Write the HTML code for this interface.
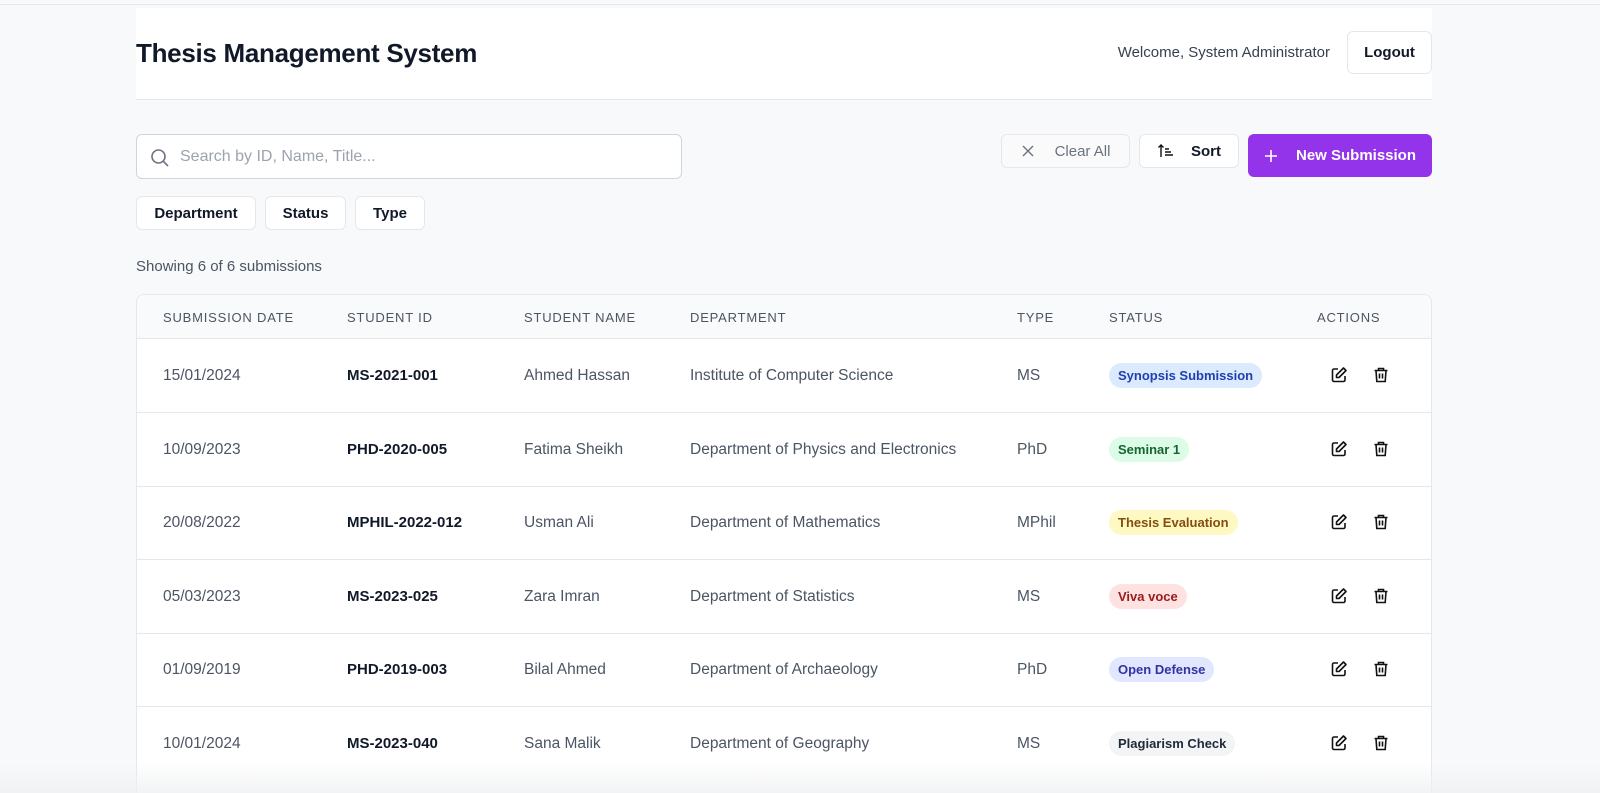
<!DOCTYPE html>
<html style="height:793px;overflow:hidden"><head><meta charset="utf-8"><style>
*{box-sizing:border-box;margin:0;padding:0}
body{width:1600px;height:793px;overflow:hidden;background:#f8f9fa;font-family:"Liberation Sans",sans-serif;color:#111827;position:relative}
.topline{position:absolute;left:0;top:4px;width:1600px;height:1px;background:#e5e7eb}
.header{position:absolute;left:136px;top:8px;width:1296px;height:92px;background:#fff;border-bottom:1px solid #e5e7eb}
.header h1{position:absolute;left:0;top:30px;font-size:26px;font-weight:bold;letter-spacing:-0.3px;color:#111827}
.welcome{position:absolute;right:102px;top:36px;font-size:15px;color:#374151}
.logout{position:absolute;right:0;top:23px;width:85px;height:43px;border:1px solid #e5e7eb;border-radius:6px;background:#fff;font-size:15px;font-weight:bold;display:flex;align-items:center;justify-content:center}
.search{position:absolute;left:136px;top:134px;width:546px;height:45px;border:1px solid #d1d5db;border-radius:6px;background:#fff}
.search span{position:absolute;left:43px;top:13px;font-size:16px;color:#9ca3af}
.btn{position:absolute;height:34px;border:1px solid #e5e7eb;border-radius:6px;background:#fff;font-size:15px;display:flex;align-items:center;justify-content:center}
.new{position:absolute;left:1248px;top:134px;width:184px;height:43px;background:#9333ea;border-radius:6px;color:#fff;font-size:15px;font-weight:bold;display:flex;align-items:center;justify-content:center;gap:18px}
.chip{position:absolute;top:196px;height:34px;border:1px solid #e5e7eb;border-radius:6px;background:#fff;font-size:15px;font-weight:bold;display:flex;align-items:center;justify-content:center}
.showing{position:absolute;left:136px;top:258px;font-size:15px;color:#4b5563}
.table{position:absolute;left:136px;top:294px;width:1296px;height:499px;background:#fff;border:1px solid #e5e7eb;border-bottom:none;border-radius:8px 8px 0 0;overflow:hidden}
.th{position:absolute;top:0;height:44px;width:100%;background:#f9fafb;border-bottom:1px solid #e5e7eb;font-size:13px;color:#4b5563;letter-spacing:0.8px}
.th span,.row span{position:absolute}
.th span{top:15px}
.row{position:absolute;left:0;width:100%;height:74px;border-bottom:1px solid #e5e7eb;font-size:15.5px;color:#4b5563}
.row span{top:28px}
.row .id{color:#111827;font-weight:bold;font-size:15px}
.row .badge{top:24px;height:25px;padding:0 9px;border-radius:13px;font-size:13px;font-weight:bold;line-height:25px}
.ic{position:absolute;top:27px}
.fade{position:absolute;left:0;top:763px;width:1600px;height:30px;background:linear-gradient(rgba(248,249,250,0),rgba(240,241,243,.85))}
</style></head><body>
<div class="topline"></div>
<div class="header"><h1>Thesis Management System</h1><div class="welcome">Welcome, System Administrator</div><div class="logout">Logout</div></div>
<div class="search"><svg style="position:absolute;left:13px;top:13px" width="20" height="20" viewBox="0 0 20 20" fill="none" stroke="#6b7280" stroke-width="1.6"><circle cx="8.5" cy="8.5" r="6.5"/><path d="M13.5 13.5L18 18"/></svg><span>Search by ID, Name, Title...</span></div>
<div class="btn" style="left:1001px;top:134px;width:129px;color:#6b7280;background:#fafafa;gap:20px"><svg width="14" height="14" viewBox="0 0 14 14" stroke="#6b7280" stroke-width="1.4"><path d="M2 2L12 12M12 2L2 12"/></svg>Clear All</div>
<div class="btn" style="left:1139px;top:134px;width:100px;font-weight:bold;gap:16px"><svg width="18" height="16" viewBox="0 0 18 16" fill="none" stroke="#111" stroke-width="1.4"><path d="M4 14V2M1.5 4.5L4 2l2.5 2.5M8 6h4M8 9h6M8 12h8"/></svg>Sort</div>
<div class="new"><svg width="14" height="14" viewBox="0 0 14 14" stroke="#fff" stroke-width="1.6"><path d="M7 1v12M1 7h12"/></svg>New Submission</div>
<div class="chip" style="left:136px;width:120px">Department</div>
<div class="chip" style="left:265px;width:81px">Status</div>
<div class="chip" style="left:355px;width:70px">Type</div>
<div class="showing">Showing 6 of 6 submissions</div>
<div class="table">
<div class="th"><span style="left:26px">SUBMISSION DATE</span><span style="left:210px">STUDENT ID</span><span style="left:387px">STUDENT NAME</span><span style="left:553px">DEPARTMENT</span><span style="left:880px">TYPE</span><span style="left:972px">STATUS</span><span style="left:1180px">ACTIONS</span></div>
<div class="row" style="top:44px"><span style="left:26px">15/01/2024</span><span class="id" style="left:210px">MS-2021-001</span><span style="left:387px">Ahmed Hassan</span><span style="left:553px">Institute of Computer Science</span><span style="left:880px">MS</span><span class="badge" style="left:972px;background:#dbeafe;color:#1e40af">Synopsis Submission</span>
<svg class="ic" style="left:1193px" width="18" height="18" viewBox="0 0 18 18" fill="none" stroke="#111" stroke-width="1.6" stroke-linejoin="round"><path d="M8 3H4a1.5 1.5 0 0 0-1.5 1.5v9.5A1.5 1.5 0 0 0 4 15.5h9.5A1.5 1.5 0 0 0 15 14v-4"/><path d="M13.5 2l2.5 2.5L9 11.5H6.5V9z"/></svg><svg class="ic" style="left:1235px" width="18" height="18" viewBox="0 0 18 18" fill="none" stroke="#111" stroke-width="1.6"><path d="M2.5 4.5h13M6.5 4.5V2.5h5v2M4 4.5l.8 11h8.4l.8-11M7.5 7.5v5M10.5 7.5v5"/></svg></div>
<div class="row" style="top:118px"><span style="left:26px">10/09/2023</span><span class="id" style="left:210px">PHD-2020-005</span><span style="left:387px">Fatima Sheikh</span><span style="left:553px">Department of Physics and Electronics</span><span style="left:880px">PhD</span><span class="badge" style="left:972px;background:#dcfce7;color:#166534">Seminar 1</span>
<svg class="ic" style="left:1193px" width="18" height="18" viewBox="0 0 18 18" fill="none" stroke="#111" stroke-width="1.6" stroke-linejoin="round"><path d="M8 3H4a1.5 1.5 0 0 0-1.5 1.5v9.5A1.5 1.5 0 0 0 4 15.5h9.5A1.5 1.5 0 0 0 15 14v-4"/><path d="M13.5 2l2.5 2.5L9 11.5H6.5V9z"/></svg><svg class="ic" style="left:1235px" width="18" height="18" viewBox="0 0 18 18" fill="none" stroke="#111" stroke-width="1.6"><path d="M2.5 4.5h13M6.5 4.5V2.5h5v2M4 4.5l.8 11h8.4l.8-11M7.5 7.5v5M10.5 7.5v5"/></svg></div>
<div class="row" style="top:191px"><span style="left:26px">20/08/2022</span><span class="id" style="left:210px">MPHIL-2022-012</span><span style="left:387px">Usman Ali</span><span style="left:553px">Department of Mathematics</span><span style="left:880px">MPhil</span><span class="badge" style="left:972px;background:#fef9c3;color:#854d0e">Thesis Evaluation</span>
<svg class="ic" style="left:1193px" width="18" height="18" viewBox="0 0 18 18" fill="none" stroke="#111" stroke-width="1.6" stroke-linejoin="round"><path d="M8 3H4a1.5 1.5 0 0 0-1.5 1.5v9.5A1.5 1.5 0 0 0 4 15.5h9.5A1.5 1.5 0 0 0 15 14v-4"/><path d="M13.5 2l2.5 2.5L9 11.5H6.5V9z"/></svg><svg class="ic" style="left:1235px" width="18" height="18" viewBox="0 0 18 18" fill="none" stroke="#111" stroke-width="1.6"><path d="M2.5 4.5h13M6.5 4.5V2.5h5v2M4 4.5l.8 11h8.4l.8-11M7.5 7.5v5M10.5 7.5v5"/></svg></div>
<div class="row" style="top:265px"><span style="left:26px">05/03/2023</span><span class="id" style="left:210px">MS-2023-025</span><span style="left:387px">Zara Imran</span><span style="left:553px">Department of Statistics</span><span style="left:880px">MS</span><span class="badge" style="left:972px;background:#fee2e2;color:#991b1b">Viva voce</span>
<svg class="ic" style="left:1193px" width="18" height="18" viewBox="0 0 18 18" fill="none" stroke="#111" stroke-width="1.6" stroke-linejoin="round"><path d="M8 3H4a1.5 1.5 0 0 0-1.5 1.5v9.5A1.5 1.5 0 0 0 4 15.5h9.5A1.5 1.5 0 0 0 15 14v-4"/><path d="M13.5 2l2.5 2.5L9 11.5H6.5V9z"/></svg><svg class="ic" style="left:1235px" width="18" height="18" viewBox="0 0 18 18" fill="none" stroke="#111" stroke-width="1.6"><path d="M2.5 4.5h13M6.5 4.5V2.5h5v2M4 4.5l.8 11h8.4l.8-11M7.5 7.5v5M10.5 7.5v5"/></svg></div>
<div class="row" style="top:338px"><span style="left:26px">01/09/2019</span><span class="id" style="left:210px">PHD-2019-003</span><span style="left:387px">Bilal Ahmed</span><span style="left:553px">Department of Archaeology</span><span style="left:880px">PhD</span><span class="badge" style="left:972px;background:#e0e7ff;color:#3730a3">Open Defense</span>
<svg class="ic" style="left:1193px" width="18" height="18" viewBox="0 0 18 18" fill="none" stroke="#111" stroke-width="1.6" stroke-linejoin="round"><path d="M8 3H4a1.5 1.5 0 0 0-1.5 1.5v9.5A1.5 1.5 0 0 0 4 15.5h9.5A1.5 1.5 0 0 0 15 14v-4"/><path d="M13.5 2l2.5 2.5L9 11.5H6.5V9z"/></svg><svg class="ic" style="left:1235px" width="18" height="18" viewBox="0 0 18 18" fill="none" stroke="#111" stroke-width="1.6"><path d="M2.5 4.5h13M6.5 4.5V2.5h5v2M4 4.5l.8 11h8.4l.8-11M7.5 7.5v5M10.5 7.5v5"/></svg></div>
<div class="row" style="top:412px;border-bottom:none"><span style="left:26px">10/01/2024</span><span class="id" style="left:210px">MS-2023-040</span><span style="left:387px">Sana Malik</span><span style="left:553px">Department of Geography</span><span style="left:880px">MS</span><span class="badge" style="left:972px;background:#f3f4f6;color:#1f2937">Plagiarism Check</span>
<svg class="ic" style="left:1193px" width="18" height="18" viewBox="0 0 18 18" fill="none" stroke="#111" stroke-width="1.6" stroke-linejoin="round"><path d="M8 3H4a1.5 1.5 0 0 0-1.5 1.5v9.5A1.5 1.5 0 0 0 4 15.5h9.5A1.5 1.5 0 0 0 15 14v-4"/><path d="M13.5 2l2.5 2.5L9 11.5H6.5V9z"/></svg><svg class="ic" style="left:1235px" width="18" height="18" viewBox="0 0 18 18" fill="none" stroke="#111" stroke-width="1.6"><path d="M2.5 4.5h13M6.5 4.5V2.5h5v2M4 4.5l.8 11h8.4l.8-11M7.5 7.5v5M10.5 7.5v5"/></svg></div>
</div>
<div class="fade"></div>
</body></html>
